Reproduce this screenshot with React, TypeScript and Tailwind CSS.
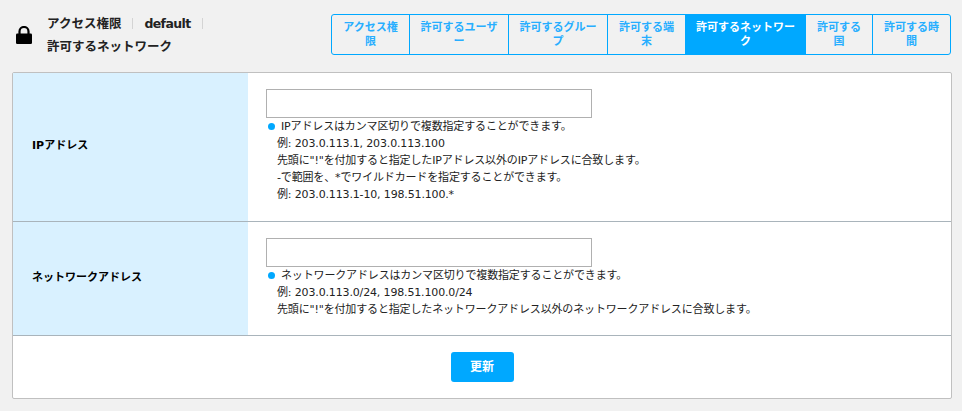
const font = { fontFamily: '"DejaVu Sans", "Noto Sans CJK JP", sans-serif' }

const TABS = [
  { label: "アクセス権限", width: "w-[77px]" },
  { label: "許可するユーザー", width: "w-[99px]" },
  { label: "許可するグループ", width: "w-[99px]" },
  { label: "許可する端末", width: "w-[78px]" },
  { label: "許可するネットワーク", width: "w-[120px]", active: true },
  { label: "許可する国", width: "w-[67px]" },
  { label: "許可する時間", width: "w-[78px]" },
]

function LockIcon() {
  return (
    <svg width="16" height="18" viewBox="0 0 16 18" className="shrink-0">
      <path d="M3.5 8V5.5a4.5 4.5 0 0 1 9 0V8" fill="none" stroke="#000" strokeWidth="2.2" />
      <rect x="0" y="7.5" width="16" height="10.5" rx="1.2" fill="#000" />
    </svg>
  )
}

function Row({ label, lines, className }: { label: string; lines: string[]; className: string }) {
  return (
    <div className={`flex border-b border-[#a9b4bb] ${className}`}>
      <div className="flex w-[235px] shrink-0 items-center bg-[#d9f1ff] pb-[1px] pl-[19px] text-[11px] font-bold text-black">
        {label}
      </div>
      <div className="flex-1 pl-[18px] pt-[16px]">
        <div className="h-[29px] w-[326px] border border-[#b0b0b0] bg-white" />
        <ul className="text-[11px] leading-[17px] tracking-[-0.15px] text-[#222]">
          {lines.map((line, i) => (
            <li key={i} className="flex h-[17px] items-center whitespace-pre pl-[11px]">
              {i === 0 ? (
                <>
                  <span className="ml-[-9px] mr-[7px] h-[7px] w-[7px] rounded-full bg-[#00a8ff]" />
                  <span className="ml-[-1px]">{line}</span>
                </>
              ) : (
                line
              )}
            </li>
          ))}
        </ul>
      </div>
    </div>
  )
}

export default function App() {
  return (
    <div className="h-[411px] w-[962px] overflow-hidden bg-[#f1f1f1] pl-[12px] pr-[10px] pt-[14px]" style={font}>
      <div className="flex h-[41px] items-center justify-between pr-[1px]">
        <div className="flex items-center pl-[4px]">
          <LockIcon />
          <div className="ml-[15px] text-[12.5px] font-bold leading-[23px] text-[#222]">
            <div className="flex items-center">
              <span>アクセス権限</span>
              <span className="mx-[11px] h-[11px] w-px bg-[#d4d4d4]" />
              <span className="tracking-[-0.6px]">default</span>
              <span className="ml-[11px] h-[11px] w-px bg-[#d4d4d4]" />
            </div>
            <div>許可するネットワーク</div>
          </div>
        </div>
        <div className="flex h-[41px] overflow-hidden rounded-[3px] border border-[#00a8ff]">
          {TABS.map((tab, i) => (
            <div
              key={tab.label}
              className={`flex items-center justify-center px-[10px] text-center text-[11px] font-bold leading-[14px] ${tab.width} ${
                i > 0 ? "border-l border-[#00a8ff]" : ""
              } ${tab.active ? "bg-[#00a8ff] text-white" : "text-[#27aeff]"}`}
            >
              {tab.label}
            </div>
          ))}
        </div>
      </div>

      <div className="mt-[17px] h-[327px] w-[940px] rounded-[2px] border border-[#c0c0c0] bg-white">
        <Row
          label="IPアドレス"
          className="h-[149px]"
          lines={[
            "IPアドレスはカンマ区切りで複数指定することができます。",
            "例: 203.0.113.1, 203.0.113.100",
            '先頭に"!"を付加すると指定したIPアドレス以外のIPアドレスに合致します。',
            "-で範囲を、*でワイルドカードを指定することができます。",
            "例: 203.0.113.1-10, 198.51.100.*",
          ]}
        />
        <Row
          label="ネットワークアドレス"
          className="h-[114px]"
          lines={[
            "ネットワークアドレスはカンマ区切りで複数指定することができます。",
            "例: 203.0.113.0/24, 198.51.100.0/24",
            '先頭に"!"を付加すると指定したネットワークアドレス以外のネットワークアドレスに合致します。',
          ]}
        />
        <div className="flex justify-center pt-[16px]">
          <button className="h-[30px] w-[63px] rounded-[3px] bg-[#00a8ff] text-[12px] font-bold text-white">
            更新
          </button>
        </div>
      </div>
    </div>
  )
}
